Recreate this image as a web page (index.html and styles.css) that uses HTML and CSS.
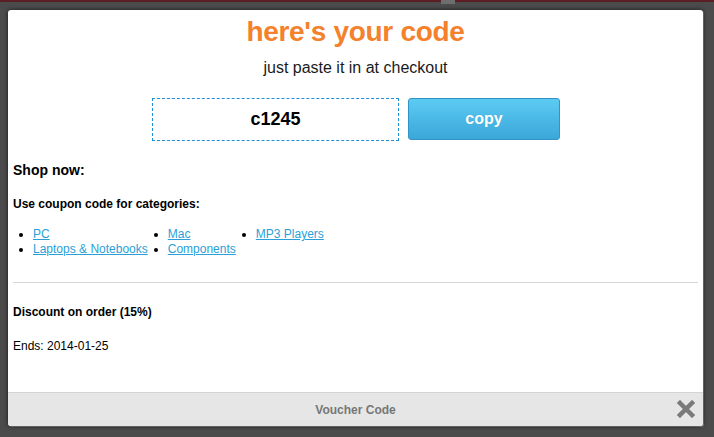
FILE: index.html
```html
<!DOCTYPE html>
<html>
<head>
<meta charset="utf-8">
<link rel="stylesheet" href="styles.css">
</head>
<body>
<div class="backdrop">
  <div class="tab"></div>
  <div class="modal">
    <div class="content">
      <h1 class="title">here's your code</h1>
      <p class="subtitle">just paste it in at checkout</p>
      <div class="code-row">
        <div class="code-box">c1245</div>
        <button class="copy-btn">copy</button>
      </div>
      <h2 class="shop">Shop now:</h2>
      <h3 class="cats">Use coupon code for categories:</h3>
      <div class="lists">
        <ul class="col">
          <li><a href="#">PC</a></li>
          <li><a href="#">Laptops &amp; Notebooks</a></li>
        </ul>
        <ul class="col">
          <li><a href="#">Mac</a></li>
          <li><a href="#">Components</a></li>
        </ul>
        <ul class="col">
          <li><a href="#">MP3 Players</a></li>
        </ul>
      </div>
      <hr class="sep">
      <h4 class="discount">Discount on order (15%)</h4>
      <p class="ends">Ends: 2014-01-25</p>
    </div>
    <div class="footer">
      <span class="footer-title">Voucher Code</span>
      <svg class="close" width="18" height="18" viewBox="0 0 18 18" aria-hidden="true">
        <path d="M3 3 L15 15 M15 3 L3 15" stroke="#7a7a7a" stroke-width="4.5" stroke-linecap="square"/>
      </svg>
    </div>
  </div>
</div>
</body>
</html>
```
FILE: styles.css
```css
* { box-sizing: border-box; }
html, body {
  margin: 0;
  padding: 0;
  width: 714px;
  height: 437px;
  overflow: hidden;
}
body {
  font-family: "Liberation Sans", Arial, sans-serif;
  background: #4a4a4a;
}
.backdrop {
  position: relative;
  width: 714px;
  height: 437px;
  border-top: 2px solid #5c1d25;
  padding: 8px 10px 0 8px;
  background: #4b4b4b;
}
.tab {
  position: absolute;
  left: 441px;
  top: -2px;
  width: 14px;
  height: 4px;
  background: #6e6e6e;
}
.modal {
  width: 695px;
  height: 416px;
  background: #fff;
  border-radius: 3px;
  box-shadow: 0 0 4px rgba(0,0,0,0.7), 1px 1px 0 #8a8a8a;
  display: flex;
  flex-direction: column;
  overflow: hidden;
}
.content {
  flex: 1;
  padding: 6px 5px 0 5px;
  color: #000;
}
.title {
  margin: 0;
  text-align: center;
  font-size: 28px;
  font-weight: bold;
  color: #f4812b;
  letter-spacing: -0.3px;
  line-height: 32px;
}
.subtitle {
  margin: 11px 0 0 0;
  text-align: center;
  font-size: 16px;
  line-height: 18px;
  color: #1a1a1a;
}
.code-row {
  display: flex;
  justify-content: center;
  gap: 9px;
  margin-top: 21px;
  padding-left: 1px;
}
.code-box {
  width: 247px;
  height: 43px;
  border: 1px dashed #1e8ed6;
  display: flex;
  align-items: center;
  justify-content: center;
  font-size: 18px;
  font-weight: bold;
  color: #000;
}
.copy-btn {
  width: 152px;
  height: 42px;
  border: 1px solid #3593c4;
  border-radius: 3px;
  background: linear-gradient(#5ccbf3, #3aa7da);
  color: #fff;
  font-family: "Liberation Sans", Arial, sans-serif;
  font-size: 16px;
  font-weight: bold;
  padding: 0;
  text-shadow: 0 0 1px rgba(0,0,0,0.15);
}
.shop {
  margin: 21px 0 0 0;
  font-size: 14px;
  line-height: 17px;
  font-weight: bold;
}
.cats {
  margin: 18px 0 0 0;
  font-size: 12px;
  line-height: 14px;
  font-weight: bold;
}
.lists {
  display: flex;
  margin-top: 16px;
}
.col {
  margin: 0;
  padding-left: 20px;
  font-size: 12px;
  line-height: 15px;
}
.col li { margin: 0; }
.col a {
  color: #2a9fd8;
  text-decoration: underline;
}
.sep {
  margin: 25px 0 0 0;
  border: 0;
  border-top: 1px solid #d8d8d8;
  height: 0;
}
.discount {
  margin: 22px 0 0 0;
  font-size: 12px;
  line-height: 14px;
  font-weight: bold;
}
.ends {
  margin: 20px 0 0 0;
  font-size: 12px;
  line-height: 14px;
}
.footer {
  position: relative;
  height: 34px;
  background: #e6e6e6;
  border-top: 1px solid #d4d4d4;
  display: flex;
  align-items: center;
  justify-content: center;
}
.footer-title {
  font-size: 12px;
  font-weight: bold;
  color: #777;
}
.close {
  position: absolute;
  right: 8px;
  top: 7px;
}
```
